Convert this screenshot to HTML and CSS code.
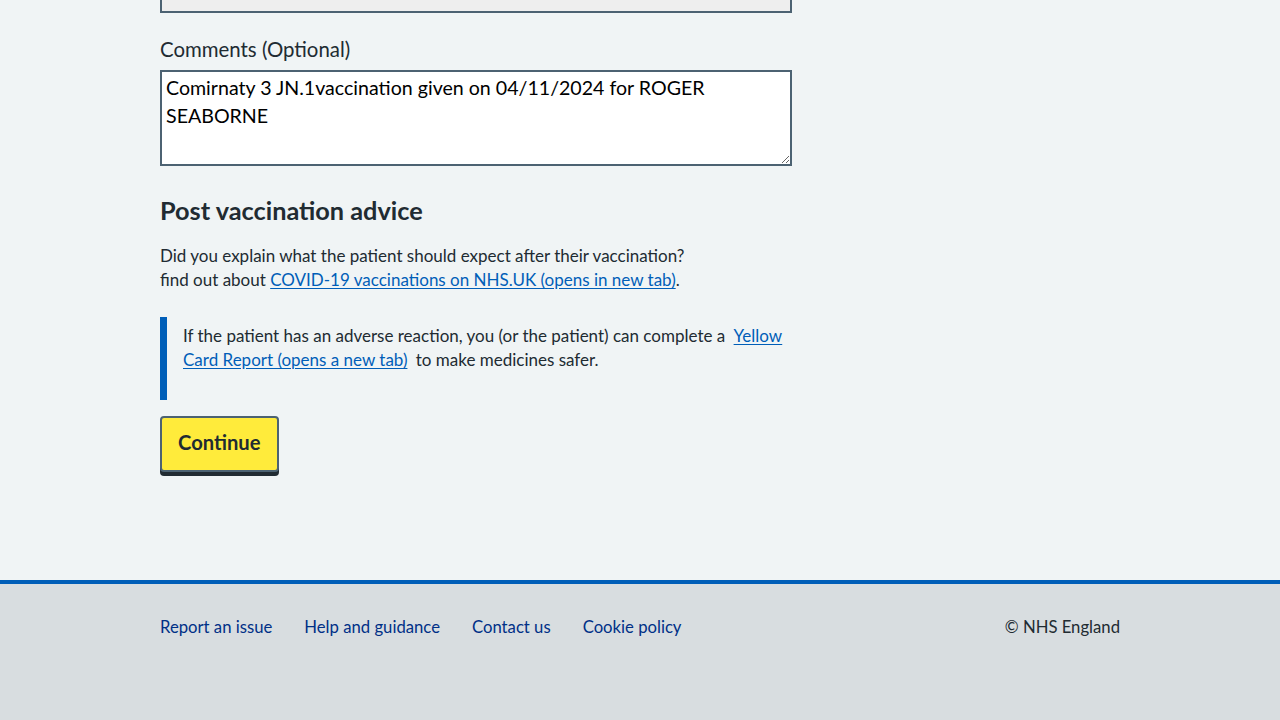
FILE: index.html
```html
<!DOCTYPE html>
<html lang="en">
<head>
<meta charset="utf-8">
<title>Record vaccination</title>
<link rel="stylesheet" href="styles.css">
</head>
<body>
<div class="page">
  <main class="container main">
    <div class="prev-field"></div>
    <div class="form-group">
      <label class="label" for="comments">Comments (Optional)</label>
      <textarea id="comments" class="textarea" rows="3">Comirnaty 3 JN.1vaccination given on 04/11/2024 for ROGER SEABORNE</textarea>
    </div>
    <h2 class="heading">Post vaccination advice</h2>
    <p class="body">Did you explain what the patient should expect after their vaccination?<br>find out about <a href="#" class="link">COVID-19 vaccinations on NHS.UK (opens in new tab)</a>.</p>
    <div class="inset">
      <p>If the patient has an adverse reaction, you (or the patient) can complete a <a href="#" class="link link-gap">Yellow Card Report (opens a new tab)</a> to make medicines safer.</p>
    </div>
    <button class="button" type="button">Continue</button>
  </main>
  <footer class="footer">
    <div class="container footer-inner">
      <ul class="footer-links">
        <li><a href="#">Report an issue</a></li>
        <li><a href="#">Help and guidance</a></li>
        <li><a href="#">Contact us</a></li>
        <li><a href="#">Cookie policy</a></li>
      </ul>
      <p class="copyright">© NHS England</p>
    </div>
  </footer>
</div>
</body>
</html>
```
FILE: styles.css
```css
* { box-sizing: border-box; }
html, body {
  margin: 0;
  padding: 0;
  background: #f0f4f5;
}
body {
  font-family: "Lato", "Liberation Sans", sans-serif;
  color: #212b32;
  height: 720px;
  overflow: hidden;
}
.page {
  display: flex;
  flex-direction: column;
  height: 720px;
}
.container {
  width: 960px;
  margin: 0 auto;
}
.main {
  flex: 1;
  padding-right: 328px;
}
.prev-field {
  height: 40px;
  margin-top: -27px;
  background: #eeeeee;
  border: 2px solid #4c6272;
}
.form-group {
  margin-top: 21px;
}
.label {
  display: block;
  font-size: 20.4px;
  line-height: 28px;
  margin-bottom: 8px;
  padding-top: 1px;
  height: 28px;
  color: #212b32;
}
.textarea {
  display: block;
  width: 100%;
  height: 96px;
  border: 2px solid #4c6272;
  background: #ffffff;
  padding: 2px 4px 4px;
  font-family: inherit;
  font-size: 19.6px;
  line-height: 28px;
  color: #000;
  margin: 0;
  border-radius: 0;
}
.heading {
  font-size: 25.3px;
  line-height: 32px;
  font-weight: 700;
  margin: 28px 0 18px;
}
.body {
  font-size: 17px;
  line-height: 24px;
  margin: 0 0 25px;
}
.link {
  color: #005eb8;
  text-decoration: underline;
  text-underline-offset: 2px;
}
.link-gap {
  margin: 0 4px;
}
.inset {
  border-left: 7px solid #005eb8;
  padding: 7px 0 28px 16px;
  margin-bottom: 16px;
}
.inset p {
  margin: 0;
  font-size: 17px;
  line-height: 24px;
}
.button {
  display: inline-block;
  background: #ffeb3b;
  border: 2px solid #4c6272;
  border-radius: 4px;
  box-shadow: 0 4px 0 #212b32;
  padding: 10px 16px 13px;
  font-family: inherit;
  font-size: 20.2px;
  line-height: 29px;
  font-weight: 700;
  color: #212b32;
  cursor: pointer;
}
.footer {
  background: #d8dde0;
  border-top: 4px solid #005eb8;
  height: 140px;
}
.footer-inner {
  display: flex;
  justify-content: space-between;
  align-items: flex-start;
  padding-top: 31px;
}
.footer-links {
  list-style: none;
  margin: 0;
  padding: 0;
  display: flex;
  gap: 32px;
}
.footer-links a {
  color: #003087;
  text-decoration: none;
  font-size: 16.7px;
  line-height: 24px;
}
.copyright {
  margin: 0;
  font-size: 16.7px;
  line-height: 24px;
  color: #212b32;
}
```
